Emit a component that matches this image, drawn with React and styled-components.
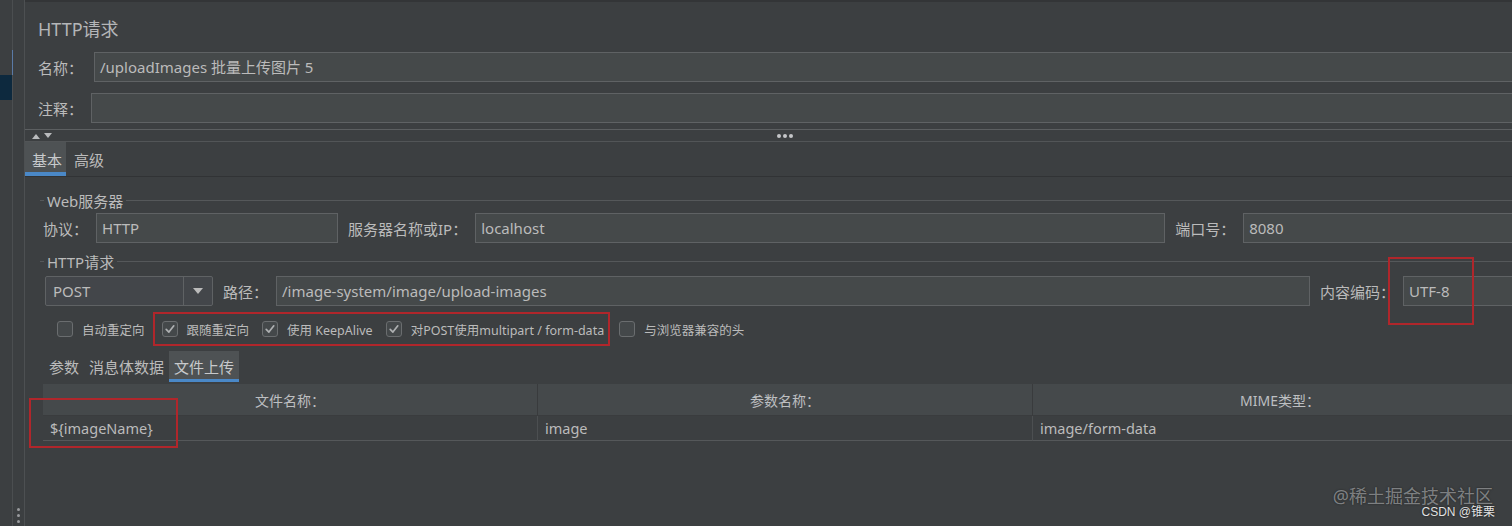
import React from 'react';
import styled, { createGlobalStyle } from 'styled-components';

const Global = createGlobalStyle`
  html, body { margin: 0; padding: 0; background: #3c3f41; }
  body {
    width: 1512px; height: 526px; overflow: hidden;
    font-family: "Noto Sans", "Noto Sans CJK SC", sans-serif;
    color: #bbbbbb;
  }
  #root { width: 1512px; height: 526px; overflow: hidden; position: relative; }
`;

const Page = styled.div`
  display: flex;
  height: 526px;
  position: relative;
  overflow: hidden;
`;

const Rail = styled.div`
  width: 12px;
  flex: none;
  display: flex;
  flex-direction: column;
  padding-top: 50px;
  border-right: 1px solid #4b4e50;
`;

const RailItem = styled.div`
  height: 25px;
  background: ${p => (p.$selected ? '#0d293e' : 'transparent')};
  box-shadow: ${p => (p.$accent ? 'inset -1px 0 #5a7aa6' : 'none')};
  margin-right: ${p => (p.$accent ? '-1px' : '0')};
`;

const Gutter = styled.div`
  width: 11px;
  flex: none;
  display: flex;
  flex-direction: column;
  justify-content: flex-end;
  align-items: center;
  padding-bottom: 3px;
  gap: 3px;
  border-right: 1px solid #4d5052;
`;

const GripDot = styled.span`
  width: 3px;
  height: 3px;
  border-radius: 50%;
  background: #9a9c9e;
`;

const Main = styled.div`
  width: 1520px;
  flex: none;
  display: flex;
  flex-direction: column;
  border-top: 2px solid #333537;
`;

const TopForm = styled.div`
  padding: 0 0 6px 13px;
  display: flex;
  flex-direction: column;
`;

const Title = styled.div`
  font-size: 18px;
  line-height: 24px;
  margin: 15px 0 11px;
  color: #b4b6b8;
`;

const FormRow = styled.div`
  display: flex;
  align-items: center;
  height: 30px;
  gap: ${p => p.$gap}px;
  margin-bottom: ${p => p.$mb || 0}px;
  padding-left: ${p => p.$pl || 0}px;
`;

const Label = styled.span`
  font-size: 15px;
  white-space: nowrap;
  color: #bbbbbb;
`;

const TextField = styled.div`
  box-sizing: border-box;
  height: 30px;
  flex: ${p => (p.$w ? 'none' : '1')};
  width: ${p => (p.$w ? `${p.$w}px` : 'auto')};
  background: #45494a;
  border: 1px solid #5f6264;
  padding: 0 5px;
  font-size: 15px;
  line-height: 28px;
  color: #bbbbbb;
  white-space: nowrap;
  overflow: hidden;
`;

const Field = styled.div`
  display: flex;
  align-items: center;
  gap: 8px;
  flex: ${p => (p.$grow ? '1' : 'none')};
`;

const Splitter = styled.div`
  display: grid;
  grid-template-columns: 1fr auto 1fr;
  align-items: center;
  height: 11px;
  border-top: 1px solid #5c5f61;
  border-bottom: 1px solid #525557;
`;

const Arrows = styled.div`
  display: flex;
  gap: 4px;
  padding-left: 7px;
`;

const Dots = styled.div`
  display: flex;
  gap: 2px;
`;

const SplitDot = styled.span`
  width: 4px;
  height: 4px;
  border-radius: 50%;
  background: #c4c6c8;
`;

const TabBar = styled.div`
  display: flex;
  height: 34px;
  gap: 1px;
  border-bottom: 1px solid #313335;
`;

const Tab = styled.div`
  display: flex;
  align-items: center;
  padding: ${p => p.$pad};
  font-size: 15px;
  color: ${p => (p.$active ? '#c8cacc' : '#bbbbbb')};
  background: ${p => (p.$active ? '#4e5254' : 'transparent')};
  box-shadow: ${p => (p.$active ? `inset 0 -${p.$line}px #4a88c7` : 'none')};
`;

const Content = styled.div`
  padding-left: 15px;
  display: flex;
  flex-direction: column;
`;

const GroupTitle = styled.div`
  display: flex;
  align-items: center;
  gap: 3px;
  height: 20px;
  margin: ${p => p.$m};
  font-size: 15px;
  &::before {
    content: '';
    width: 4px;
    border-top: 1px solid #55585a;
  }
  &::after {
    content: '';
    flex: 1;
    border-top: 1px solid #55585a;
  }
`;

const Combo = styled.div`
  box-sizing: border-box;
  width: 168px;
  height: 30px;
  flex: none;
  display: flex;
  border: 1px solid #5f6264;
  background: #43464a;
  border-radius: 2px;
`;

const ComboValue = styled.div`
  flex: 1;
  padding-left: 7px;
  font-size: 15px;
  line-height: 28px;
`;

const ComboButton = styled.div`
  width: 28px;
  display: flex;
  align-items: center;
  justify-content: center;
  border-left: 1px solid #5f6264;
`;

const CheckRow = styled.div`
  display: flex;
  align-items: center;
  height: 34px;
  margin-top: 6px;
  padding-left: 17px;
  gap: 8px;
`;

const CheckItem = styled.div`
  display: flex;
  align-items: center;
  gap: 9px;
  font-size: 12.5px;
  white-space: nowrap;
  color: #bbbbbb;
`;

const Box = styled.span`
  box-sizing: border-box;
  width: 16px;
  height: 16px;
  border: 1px solid #6a6d6f;
  border-radius: 3px;
  background: #44484a;
  display: flex;
  align-items: center;
  justify-content: center;
`;

const Highlight = styled.div`
  box-sizing: border-box;
  display: flex;
  align-items: center;
  gap: 13px;
  height: 34px;
  padding: 0 4px 0 7px;
  margin-right: 1px;
  border: 2px solid #b0262b;
`;

const SubTabs = styled.div`
  display: flex;
  height: 31px;
  margin-top: 5px;
  padding-left: 4px;
`;

const Table = styled.div`
  margin-top: 2px;
  margin-left: 3px;
  display: grid;
  grid-template-columns: 495px 495px 495px;
  grid-template-rows: 32px 25px 1fr;
  flex: 1;
`;

const HeadCell = styled.div`
  background: #45494b;
  border-right: 1px solid #393b3d;
  border-bottom: 1px solid #3a3c3e;
  display: flex;
  align-items: center;
  justify-content: center;
  font-size: 14px;
  color: #bdbfc1;
`;

const Cell = styled.div`
  border-right: 1px solid #4c4f51;
  border-bottom: 1px solid #55585a;
  display: flex;
  align-items: center;
  padding-left: 7px;
  font-size: 14.5px;
  color: #bbbbbb;
`;

const EmptyCell = styled.div`
  border-right: 1px solid #4a4d4f;
`;

const Body = styled.div`
  flex: 1;
  display: flex;
  flex-direction: column;
  height: 349px;
`;

const Mark = styled.div`
  position: absolute;
  box-sizing: border-box;
  border: 2px solid #b0262b;
  pointer-events: none;
`;

const Watermark = styled.div`
  position: absolute;
  right: 19px;
  top: 486px;
  font-size: 18px;
  line-height: 20px;
  color: rgba(200, 202, 204, 0.55);
  text-shadow: 0 0 2px rgba(0, 0, 0, 0.5);
  white-space: nowrap;
`;

const Credit = styled.div`
  position: absolute;
  right: 17px;
  top: 505px;
  font-family: "Liberation Sans", "Noto Sans CJK SC", sans-serif;
  font-size: 12px;
  line-height: 14px;
  color: #e2e2e2;
  text-shadow: 0 0 2px rgba(0, 0, 0, 0.7);
  white-space: nowrap;
`;

const Check = () => (
  <svg width="12" height="12" viewBox="0 0 12 12">
    <path d="M2.2 6.4 L4.9 9.1 L9.8 2.8" fill="none" stroke="#aeb0b2" strokeWidth="1.7" strokeLinecap="round" strokeLinejoin="round" />
  </svg>
);

const CheckBox = ({ checked, children }) => (
  <CheckItem>
    <Box>{checked && <Check />}</Box>
    <span>{children}</span>
  </CheckItem>
);

const Tri = ({ up }) => (
  <svg width="8" height="6" viewBox="0 0 8 6">
    <path d={up ? 'M0 6 L4 1 L8 6 Z' : 'M0 0 L8 0 L4 5 Z'} fill="#b9bbbd" />
  </svg>
);

export default function App() {
  return (
    <>
      <Global />
      <Page>
        <Rail>
          <RailItem $accent />
          <RailItem $selected />
        </Rail>
        <Gutter>
          <GripDot />
          <GripDot />
          <GripDot />
        </Gutter>
        <Main>
          <TopForm>
            <Title>HTTP请求</Title>
            <FormRow $gap={11} $mb={11}>
              <Label>名称：</Label>
              <TextField>/uploadImages 批量上传图片 5</TextField>
            </FormRow>
            <FormRow $gap={8}>
              <Label>注释：</Label>
              <TextField />
            </FormRow>
          </TopForm>
          <Splitter>
            <Arrows>
              <Tri up />
              <Tri />
            </Arrows>
            <Dots>
              <SplitDot />
              <SplitDot />
              <SplitDot />
            </Dots>
            <span />
          </Splitter>
          <TabBar>
            <Tab $active $line={4} $pad="0 4px 0 7px">基本</Tab>
            <Tab $pad="0 7px">高级</Tab>
          </TabBar>
          <Content>
            <GroupTitle $m="13px 0 3px">Web服务器</GroupTitle>
            <FormRow $gap={10} $pl={3}>
              <Field>
                <Label>协议：</Label>
                <TextField $w={242}>HTTP</TextField>
              </Field>
              <Field>
                <Label>服务器名称或IP：</Label>
                <TextField $w={690}>localhost</TextField>
              </Field>
              <Field $grow>
                <Label>端口号：</Label>
                <TextField>8080</TextField>
              </Field>
            </FormRow>
            <GroupTitle $m="8px 0 5px">HTTP请求</GroupTitle>
            <FormRow $gap={10} $pl={5}>
              <Combo>
                <ComboValue>POST</ComboValue>
                <ComboButton>
                  <svg width="10" height="6" viewBox="0 0 10 6">
                    <path d="M0 0 L10 0 L5 6 Z" fill="#bbbbbb" />
                  </svg>
                </ComboButton>
              </Combo>
              <Field>
                <Label>路径：</Label>
                <TextField $w={1034}>/image-system/image/upload-images</TextField>
              </Field>
              <Field $grow>
                <Label>内容编码：</Label>
                <TextField>UTF-8</TextField>
              </Field>
            </FormRow>
            <CheckRow>
              <CheckBox>自动重定向</CheckBox>
              <Highlight>
                <CheckBox checked>跟随重定向</CheckBox>
                <CheckBox checked>使用 KeepAlive</CheckBox>
                <CheckBox checked>对POST使用multipart / form-data</CheckBox>
              </Highlight>
              <CheckBox>与浏览器兼容的头</CheckBox>
            </CheckRow>
            <SubTabs>
              <Tab $pad="0 5px">参数</Tab>
              <Tab $pad="0 5px">消息体数据</Tab>
              <Tab $active $line={3} $pad="0 5px">文件上传</Tab>
            </SubTabs>
            <Body>
              <Table>
                <HeadCell>文件名称：</HeadCell>
                <HeadCell>参数名称：</HeadCell>
                <HeadCell>MIME类型：</HeadCell>
                <Cell>{'${imageName}'}</Cell>
                <Cell>image</Cell>
                <Cell>image/form-data</Cell>
                <EmptyCell />
                <EmptyCell />
                <EmptyCell />
              </Table>
            </Body>
          </Content>
        </Main>
        <Mark style={{ left: 1388, top: 257, width: 86, height: 68 }} />
        <Mark style={{ left: 29, top: 398, width: 149, height: 50 }} />
        <Watermark>@稀土掘金技术社区</Watermark>
        <Credit>CSDN @锥栗</Credit>
      </Page>
    </>
  );
}
